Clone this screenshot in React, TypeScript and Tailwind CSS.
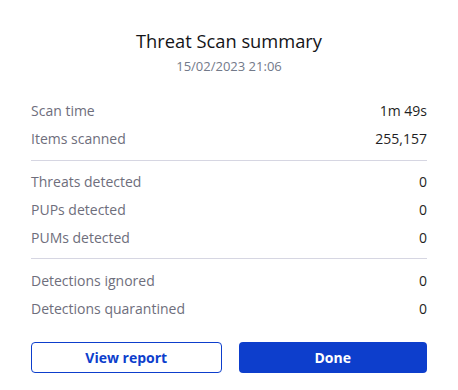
import React from "react";

const Row = ({ label, value }: { label: string; value: string }) => (
  <div className="flex h-[28px] items-center justify-between">
    <span className="text-[14px] text-[#6e6e7c]">{label}</span>
    <span className="text-[14px] text-[#1f1f24]">{value}</span>
  </div>
);

export default function App() {
  return (
    <div
      className="w-[458px] h-[390px] bg-white px-[31px] pt-[28px]"
      style={{ fontFamily: "'Open Sans', sans-serif" }}
    >
      <div className="flex flex-col items-center">
        <h1 className="text-[18.3px] leading-[26px] text-[#141418]">Threat Scan summary</h1>
        <div className="mt-[3px] text-[13px] leading-[18px] text-[#737a8a]">15/02/2023 21:06</div>
      </div>
      <div className="mt-[21px]">
        <Row label="Scan time" value="1m 49s" />
        <Row label="Items scanned" value="255,157" />
      </div>
      <div className="mt-[8px] mb-[6px] h-px bg-[#d6d6e2]" />
      <div>
        <Row label="Threats detected" value="0" />
        <Row label="PUPs detected" value="0" />
        <Row label="PUMs detected" value="0" />
      </div>
      <div className="mt-[7px] mb-[7px] h-px bg-[#d6d6e2]" />
      <div>
        <Row label="Detections ignored" value="0" />
        <Row label="Detections quarantined" value="0" />
      </div>
      <div className="mt-[20px] flex gap-[17px]">
        <button className="flex h-[31px] flex-1 items-center justify-center rounded-[4px] border border-[#0d3ecc] bg-white text-[14px] font-bold text-[#0d3ecc]">
          View report
        </button>
        <button className="flex h-[31px] flex-1 items-center justify-center rounded-[4px] bg-[#0d3ecc] text-[14px] font-bold text-white">
          Done
        </button>
      </div>
    </div>
  );
}
